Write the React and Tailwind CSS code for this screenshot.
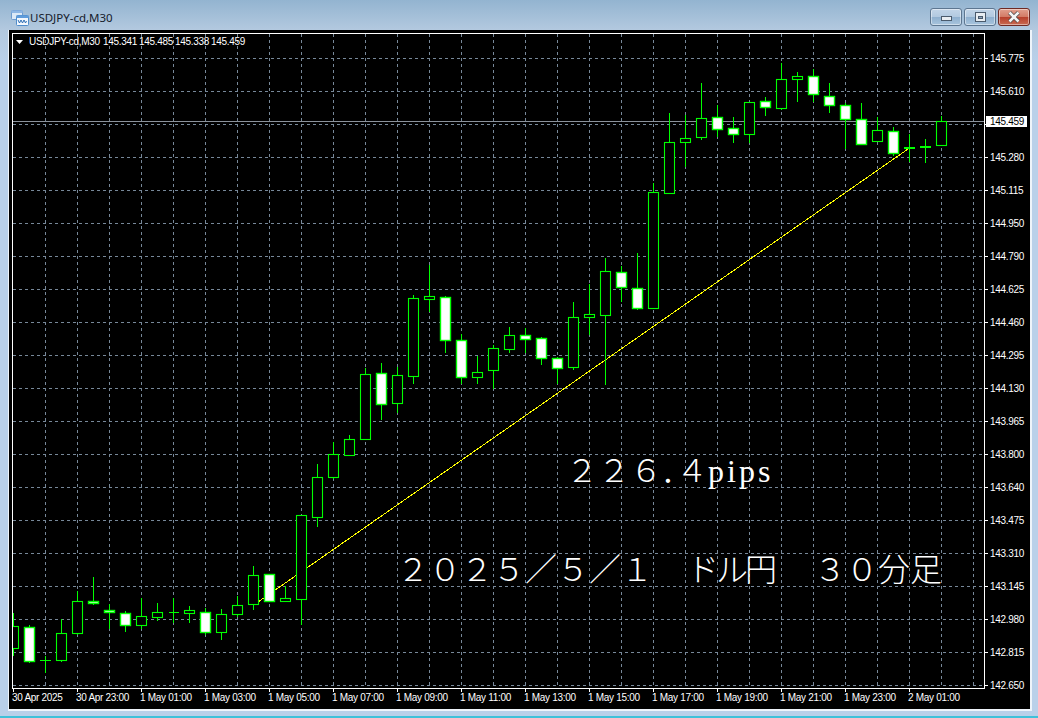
const prices = ['145.775','145.610','145.445','145.280','145.115','144.950','144.790','144.625','144.460','144.295','144.130','143.965','143.800','143.640','143.475','143.310','143.145','142.980','142.815','142.650']
const times = ['30 Apr 2025','30 Apr 23:00','1 May 01:00','1 May 03:00','1 May 05:00','1 May 07:00','1 May 09:00','1 May 11:00','1 May 13:00','1 May 15:00','1 May 17:00','1 May 19:00','1 May 21:00','1 May 23:00','2 May 01:00']

// [wick top, wick bottom, body top, body bottom, white?] one bar every 16px from x=13
const bars = [
  [613,656,626,648,0],[625,663,627,661,1],[656,673,660,661,2],[619,662,633,660,0],[591,635,601,633,0],
  [577,605,601,603,1],[604,629,610,612,1],[611,632,613,625,1],[598,629,616,625,0],[603,621,612,617,0],
  [598,623,612,612,3],[606,623,610,613,0],[608,635,612,632,1],[609,640,614,632,0],[596,617,605,614,0],
  [566,610,575,604,0],[574,601,574,601,1],[586,602,598,601,0],[515,625,515,599,0],[464,527,477,517,0],
  [442,479,454,477,0],[435,455,439,455,0],[368,439,374,439,0],[363,420,373,404,1],[367,413,375,403,0],
  [295,384,298,376,0],[265,312,296,299,0],[296,353,297,340,1],[334,384,340,377,1],[356,384,372,377,0],
  [345,389,348,370,0],[327,353,335,349,0],[328,353,335,339,1],[337,365,338,358,1],[357,384,358,368,1],
  [302,370,317,367,0],[284,335,314,317,0],[258,385,271,315,0],[266,302,272,287,1],[253,310,288,308,1],
  [183,308,192,308,0],[113,193,142,193,0],[115,167,138,142,0],[83,140,118,137,0],[105,137,117,129,1],
  [117,143,128,134,1],[102,143,102,134,0],[97,116,101,107,1],[63,110,79,108,0],[72,102,76,79,0],
  [69,102,76,94,1],[83,113,96,105,1],[103,149,105,119,1],[103,145,119,144,1],[117,142,130,141,0],
  [127,156,131,153,1],[134,162,147,149,2],[139,163,146,148,2],[116,145,121,145,0],
]

function Candle({ bar, x }) {
  const [wt, wb, bt, bb, kind] = bar
  const cx = x + 0.5
  return (
    <g>
      <line x1={cx} x2={cx} y1={wt} y2={wb} stroke="#00ff00" strokeWidth="1" shapeRendering="crispEdges" />
      {kind === 3 && <line x1={cx - 5} x2={cx + 5} y1={bt + 0.5} y2={bt + 0.5} stroke="#00ff00" shapeRendering="crispEdges" />}
      {kind === 2 && <rect x={cx - 5.5} y={bt} width="11" height={bb - bt} fill="#00ff00" />}
      {kind < 2 && (
        <rect x={cx - 5} y={bt + 0.5} width="10" height={bb - bt}
          fill={kind === 1 ? '#ffffff' : '#000000'} stroke="#00ff00" strokeWidth={kind === 1 ? 1.4 : 1.1} />
      )}
    </g>
  )
}

function Chart() {
  const font = { fontFamily: '"Liberation Sans", sans-serif', fontSize: 10, letterSpacing: -0.3 }
  return (
    <svg viewBox="9 30 1021 679" width="1021" height="679" className="block">
      <rect x="9" y="30" width="1021" height="679" fill="#000" />
      {/* grid */}
      <g stroke="#778899" strokeDasharray="3 3" shapeRendering="crispEdges">
        {Array.from({ length: 30 }, (_, i) => (
          <line key={i} x1={45.5 + i * 32} x2={45.5 + i * 32} y1="34" y2="688" />
        ))}
        {prices.map((p, i) => (
          <line key={p} x1="13" x2="985" y1={58.5 + i * 33} y2={58.5 + i * 33} />
        ))}
      </g>
      {/* current bid line */}
      <line x1="13" x2="985" y1="121.5" y2="121.5" stroke="#8b929b" shapeRendering="crispEdges" />
      {/* trend line */}
      <line x1="258" y1="602" x2="908" y2="149" stroke="#ffff00" strokeWidth="1" shapeRendering="crispEdges" />
      {bars.map((b, i) => <Candle key={i} bar={b} x={13 + i * 16} />)}
      {/* clip bars hanging over the left edge */}
      <rect x="9" y="34" width="3" height="654" fill="#000" />
      {/* frame + ticks */}
      <g stroke="#fff" shapeRendering="crispEdges">
        <rect x="12.5" y="33.5" width="972" height="655" fill="none" />
        {prices.map((p, i) => (
          <line key={p} x1="985" x2="988" y1={58.5 + i * 33} y2={58.5 + i * 33} />
        ))}
        {times.map((t, i) => (
          <line key={t} x1={13.5 + i * 64} x2={13.5 + i * 64} y1="689" y2="692" />
        ))}
      </g>
      <g fill="#fff" {...font}>
        {/* 145.445 sits under the bid label, so it never shows */}
        {prices.map((p, i) => i !== 2 && (
          <text key={p} x="990" y={62 + i * 33}>{p}</text>
        ))}
        {times.map((t, i) => (
          <text key={t} x={12 + i * 64} y="701">{t}</text>
        ))}
        <text x="29" y="45">USDJPY-cd,M30</text>
        <text x="103" y="45">145.341</text>
        <text x="139" y="45">145.485</text>
        <text x="175" y="45">145.338</text>
        <text x="211" y="45">145.459</text>
      </g>
      <polygon points="16,40 23,40 19.5,44" fill="#fff" />
      <rect x="986" y="116" width="41" height="11" fill="#fff" />
      <text x="990" y="125" fill="#000" {...font}>145.459</text>
    </svg>
  )
}

function AppIcon() {
  return (
    <svg width="18" height="18" viewBox="0 0 18 18" className="shrink-0">
      <rect x="0.5" y="1.5" width="11" height="9" rx="1" fill="#dce9f7" stroke="#6c9bd0" />
      <rect x="0.5" y="1.5" width="11" height="2.5" fill="#8db6e4" />
      <rect x="5.5" y="6.5" width="12" height="10" rx="1" fill="#f3f8fe" stroke="#4f8ccb" />
      <rect x="5.5" y="6.5" width="12" height="2.5" fill="#5f9cdc" />
      <path d="M7 11l1.5 3 1.5-3 1.5 3 1.5-3 1.5 3 1-2" fill="none" stroke="#2f6fb5" strokeWidth="1" />
    </svg>
  )
}

function WinButton({ className, children }) {
  return (
    <div className={`h-[18px] flex items-center justify-center rounded-[3px] border border-[#5d7690] shadow-[inset_0_0_0_1px_rgba(255,255,255,0.45)] ${className}`}>
      {children}
    </div>
  )
}

function TitleBar() {
  return (
    <div className="h-[30px] flex pl-[11px] pr-[8px]">
      <div className="flex items-center gap-[1px] pt-[5px]">
        <AppIcon />
        <span className="text-[11.5px] text-[#16202c] font-['Noto_Sans',sans-serif]">USDJPY-cd,M30</span>
      </div>
      <div className="flex-1" />
      <div className="flex gap-[2px] pt-[8px]">
        <WinButton className="w-[32px] bg-[linear-gradient(#c2d5e8_0%,#b2c9e0_48%,#8fb0cf_52%,#a8c4dd_100%)]">
          <div className="w-[11px] h-[5px] mt-[3px] bg-[#e8edf2] border border-[#4a5a6c]" />
        </WinButton>
        <WinButton className="w-[32px] bg-[linear-gradient(#c2d5e8_0%,#b2c9e0_48%,#8fb0cf_52%,#a8c4dd_100%)]">
          <div className="w-[11px] h-[10px] bg-[#e8edf2] border border-[#4a5a6c] flex items-center justify-center">
            <div className="w-[5px] h-[3px] bg-[#8fa5bb] border border-[#4a5a6c]" />
          </div>
        </WinButton>
        <WinButton className="w-[32px] border-[#6e2a24] bg-[linear-gradient(#e2a08e_0%,#d37b66_48%,#b8402c_52%,#c86a52_100%)]">
          <svg width="14" height="12" viewBox="0 0 14 12">
            <path d="M2.5 1.5L11.5 10.5M11.5 1.5L2.5 10.5" stroke="#4a4a4a" strokeWidth="4" />
            <path d="M2.5 1.5L11.5 10.5M11.5 1.5L2.5 10.5" stroke="#f4f4f4" strokeWidth="2.6" />
          </svg>
        </WinButton>
      </div>
    </div>
  )
}

export default function App() {
  return (
    <div className="w-[1038px] h-[718px] overflow-hidden flex flex-col bg-[linear-gradient(#93b4d0_0px,#b3c9df_30px,#b9d0e9_60px)]">
      <TitleBar />
      <div className="flex-1 flex pl-[8px] pr-[6px]">
        <div className="relative border-l border-r-2 border-b-2 border-l-[#eef4fa] border-r-[#eef4fa] border-b-[#eef4fa] self-start">
          <Chart />
          {/* hand-typed notes on the chart */}
          <div className="absolute left-[557px] top-[421px] flex items-baseline whitespace-nowrap text-white text-[32px] leading-[40px] font-light font-['Liberation_Serif','Noto_Sans_CJK_JP',serif]">
            <span>２２６</span>
            <span className="-ml-[1px] tracking-[-17px]">．</span>
            <span>４</span>
            <span className="tracking-[3px]">pips</span>
          </div>
          <div className="absolute left-[388px] top-[520px] flex items-baseline whitespace-nowrap text-white text-[32px] leading-[40px] font-light font-['Liberation_Serif','Noto_Sans_CJK_JP',serif]">
            <span>２０２５／５／１</span>
            <span className="ml-[34px] tracking-[-3px]">ドル円</span>
            <span className="ml-[40px]">３０分足</span>
          </div>
        </div>
      </div>
      <div className="h-[2px] bg-[#3fc1d9]" />
    </div>
  )
}
